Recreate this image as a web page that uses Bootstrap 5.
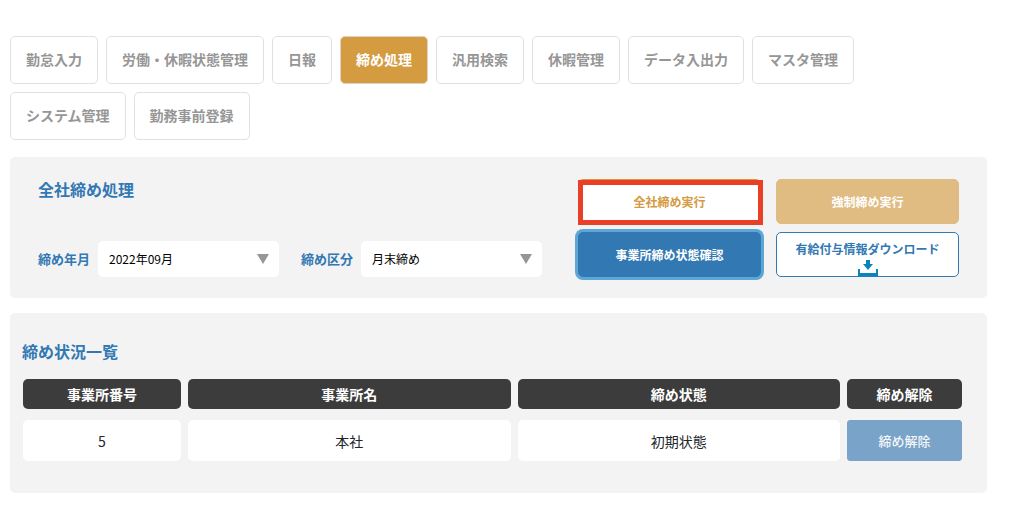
<!DOCTYPE html>
<html lang="ja">
<head>
<meta charset="utf-8">
<meta name="viewport" content="width=device-width, initial-scale=1">
<title>締め処理</title>
<link href="https://cdn.jsdelivr.net/npm/bootstrap@5.3.0/dist/css/bootstrap.min.css" rel="stylesheet">
<style>
  :root { --blue: #3278b3; --gold: #d49b41; --radius: 5px; }
  body { font-family: "Noto Sans CJK JP", sans-serif; font-size: 14px; line-height: 20px; color: #212529; }
  .page { padding: 36px 37px 12px 10px; }
  .tabs { margin-bottom: 17px; padding-right: 28px; }
  .tabs .btn { --bs-btn-color: #969696; --bs-btn-border-color: #e0e0e0; --bs-btn-bg: #fff;
    --bs-btn-active-color: #fff; --bs-btn-active-bg: var(--gold); --bs-btn-active-border-color: #e0d5c3;
    --bs-btn-font-size: 14px; --bs-btn-font-weight: 700; --bs-btn-line-height: 20px;
    --bs-btn-padding-x: 15px; --bs-btn-border-radius: var(--radius); padding-top: 12px; padding-bottom: 14px; }
  .panel { background: #f3f3f3; border-radius: var(--radius); }
  .panel-run { padding: 22px 28px 21px; margin-bottom: 15px; }
  .panel-list { padding: 28px 18px 21px 6px; }
  .panel-list .panel-title { padding: 0 6px 7px; }
  .panel-title { font-size: 16px; line-height: 20px; font-weight: 700; color: var(--blue); }
  .field-label { font-size: 13px; font-weight: 700; color: var(--blue); }
  .fields { column-gap: 22px; }
  .field-select { width: 181px; height: 36px; border: 0; border-radius: var(--radius); color: #000; font-size: 12px; line-height: 18px;
    padding: 0 30px 0 11px; background: #fff url("data:image/svg+xml,%3Csvg xmlns='http://www.w3.org/2000/svg' viewBox='0 0 12 10'%3E%3Cpath fill='%23969696' d='M0 0h12L6 10z'/%3E%3C/svg%3E") no-repeat right 10px center / 12px 10px; }
  .actions { display: grid; grid-template-columns: 1fr 1fr; gap: 8px 15px; flex: 0 0 381px; }
  .actions .btn { --bs-btn-font-size: 12px; --bs-btn-font-weight: 700; --bs-btn-line-height: 18px; --bs-btn-padding-x: 4px;
    --bs-btn-padding-y: 0; --bs-btn-border-radius: var(--radius); --bs-btn-disabled-opacity: 1; height: 45px; }
  .btn-gold-line { --bs-btn-color: var(--gold); --bs-btn-bg: #fff; --bs-btn-border-color: var(--gold); }
  .btn-gold { --bs-btn-disabled-color: #fff; --bs-btn-disabled-bg: #e0bb82; --bs-btn-disabled-border-color: #e0bb82; }
  .btn-blue { --bs-btn-color: #fff; --bs-btn-bg: var(--blue); --bs-btn-border-color: var(--blue); box-shadow: 0 0 0 3px #5da6d8; }
  .btn-blue-line { --bs-btn-color: var(--blue); --bs-btn-bg: #fff; --bs-btn-border-color: var(--blue); }
  .callout-frame::after { content: ""; position: absolute; inset: 0 -3px -2px -1px; border: 5px solid #e93f26; pointer-events: none; }
  .status-table { width: 100%; table-layout: fixed; border-collapse: separate; border-spacing: 7px 11px; text-align: center; }
  .status-table th { height: 30px; background: #3c3c3c; color: #fff; font-weight: 700; border-radius: var(--radius); }
  .status-table td { height: 41px; padding: 0; background: #fff; border-radius: var(--radius); }
  .status-table td.cell-action { background: none; }
  .col-no { width: 158px; } .col-act { width: 115px; }
  .btn-release { --bs-btn-font-size: 13px; --bs-btn-font-weight: 500; --bs-btn-line-height: 20px; --bs-btn-padding-y: 0;
    --bs-btn-disabled-color: #f4f7fa; --bs-btn-disabled-bg: #79a3c9; --bs-btn-disabled-border-color: #79a3c9;
    --bs-btn-disabled-opacity: 1; --bs-btn-border-radius: 3px; height: 41px; }
</style>
</head>
<body>
<div class="page">
  <nav class="tabs d-flex flex-wrap gap-2">
    <button type="button" class="btn">勤怠入力</button>
    <button type="button" class="btn">労働・休暇状態管理</button>
    <button type="button" class="btn">日報</button>
    <button type="button" class="btn active" aria-current="page">締め処理</button>
    <button type="button" class="btn">汎用検索</button>
    <button type="button" class="btn">休暇管理</button>
    <button type="button" class="btn">データ入出力</button>
    <button type="button" class="btn">マスタ管理</button>
    <button type="button" class="btn">システム管理</button>
    <button type="button" class="btn">勤務事前登録</button>
  </nav>

  <main>
    <section class="panel panel-run d-flex flex-wrap justify-content-between gap-3">
      <div class="d-flex flex-column justify-content-between">
        <h2 class="panel-title m-0">全社締め処理</h2>
        <div class="fields d-flex flex-wrap align-items-center">
          <div class="d-flex align-items-center gap-2">
            <label class="field-label" for="month">締め年月</label>
            <select id="month" class="form-select field-select"><option>2022年09月</option></select>
          </div>
          <div class="d-flex align-items-center gap-2">
            <label class="field-label" for="kind">締め区分</label>
            <select id="kind" class="form-select field-select"><option>月末締め</option></select>
          </div>
        </div>
      </div>
      <div class="actions">
        <button type="button" class="btn btn-gold-line callout-frame position-relative">全社締め実行</button>
        <button type="button" class="btn btn-gold" disabled>強制締め実行</button>
        <button type="button" class="btn btn-blue">事業所締め状態確認</button>
        <button type="button" class="btn btn-blue-line d-flex flex-column align-items-center justify-content-end">
          有給付与情報ダウンロード
          <svg width="20" height="18" viewBox="0 0 20 18" fill="#0a84bd" aria-hidden="true">
            <path d="M8 2h4v4h3l-5 6-5-6h3z"/>
            <path d="M0 11h2v4h16v-4h2v7H0z"/>
          </svg>
        </button>
      </div>
    </section>

    <section class="panel panel-list">
      <h2 class="panel-title m-0">締め状況一覧</h2>
      <table class="status-table">
        <colgroup><col class="col-no"><col><col><col class="col-act"></colgroup>
        <thead>
          <tr><th scope="col">事業所番号</th><th scope="col">事業所名</th><th scope="col">締め状態</th><th scope="col">締め解除</th></tr>
        </thead>
        <tbody>
          <tr><td>5</td><td>本社</td><td>初期状態</td><td class="cell-action"><button type="button" class="btn btn-release w-100 d-block" disabled>締め解除</button></td></tr>
        </tbody>
      </table>
    </section>
  </main>
</div>
<script src="https://cdn.jsdelivr.net/npm/bootstrap@5.3.0/dist/js/bootstrap.bundle.min.js"></script>
</body>
</html>
